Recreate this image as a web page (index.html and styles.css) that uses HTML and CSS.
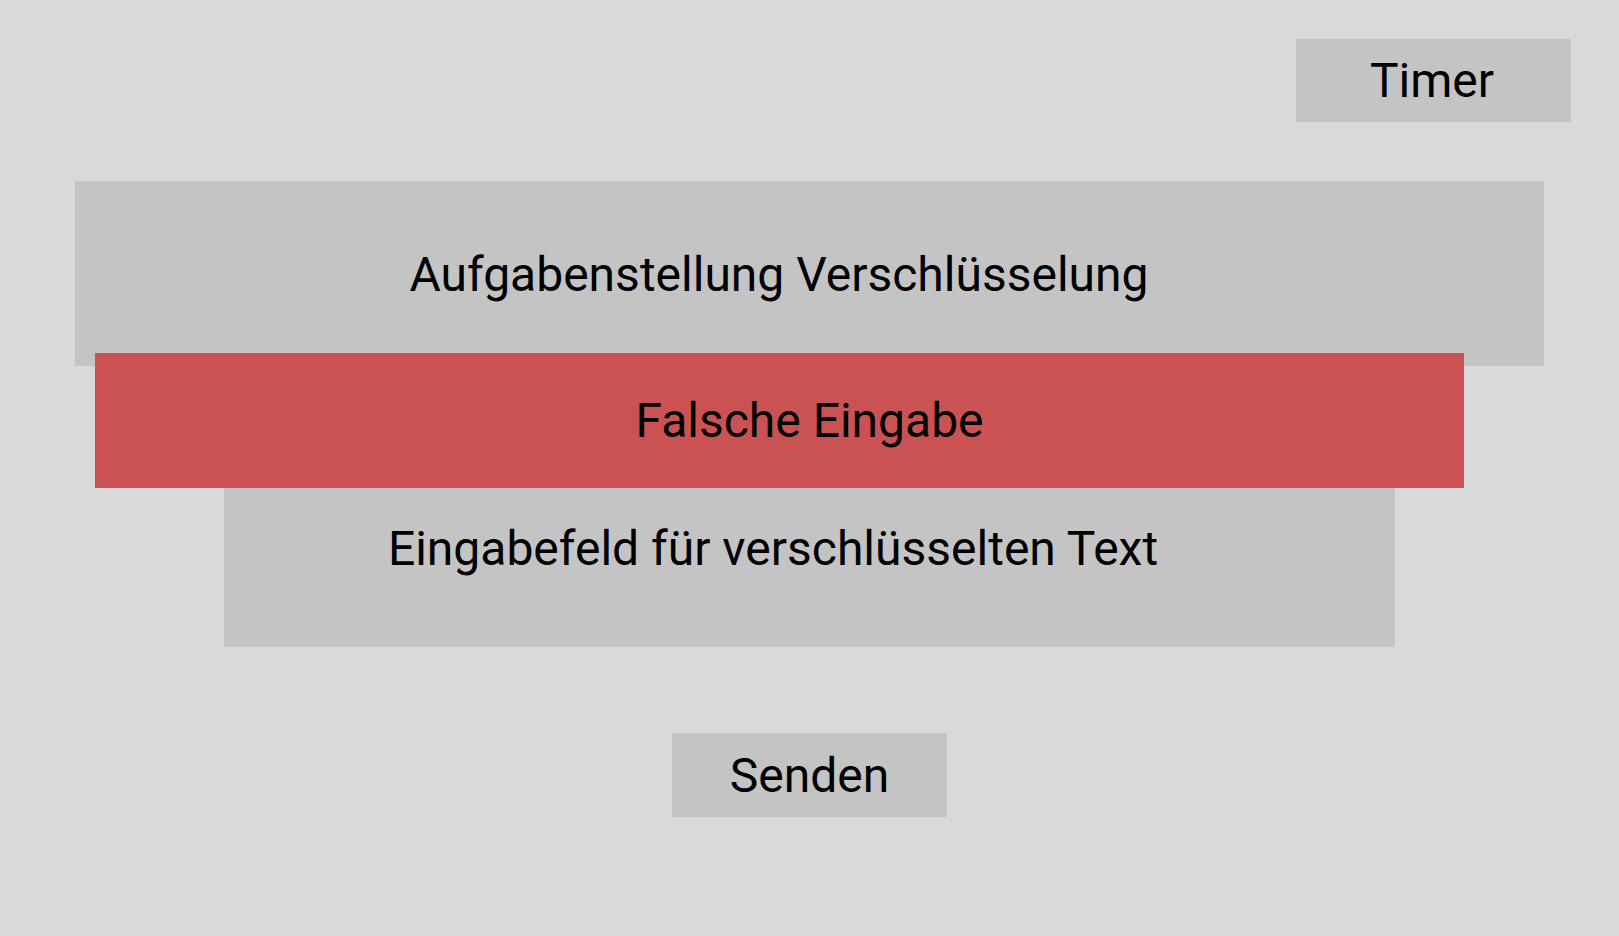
FILE: index.html
```html
<!DOCTYPE html>
<html lang="de">
<head>
<meta charset="utf-8">
<title>Verschlüsselung</title>
<link rel="stylesheet" href="styles.css">
</head>
<body>
<div class="page">
  <header class="topbar">
    <div class="timer">Timer</div>
  </header>
  <main class="content">
    <section class="task">Aufgabenstellung Verschlüsselung</section>
    <div class="input-field">Eingabefeld für verschlüsselten Text</div>
    <div class="error">Falsche Eingabe</div>
    <div class="actions">
      <button class="send" type="button">Senden</button>
    </div>
  </main>
</div>
</body>
</html>
```

FILE: styles.css
```css
html, body {
  margin: 0;
  padding: 0;
}
body {
  background: #d9d9d9;
  font-family: Roboto, "Liberation Sans", sans-serif;
  color: #000;
  width: 1619px;
  height: 936px;
  overflow: hidden;
}
.page {
  display: flex;
  flex-direction: column;
  padding-top: 39px;
}
.topbar {
  display: flex;
  justify-content: flex-end;
  padding-right: 48px;
}
.timer {
  width: 275px;
  height: 83px;
  background: #c4c4c4;
  display: flex;
  align-items: center;
  justify-content: center;
  font-size: 48px;
  box-sizing: border-box;
  padding-right: 3px;
}
.content {
  position: relative;
  display: flex;
  flex-direction: column;
  align-items: center;
  margin-top: 59px;
}
.task {
  width: 1469px;
  height: 185px;
  background: #c4c4c4;
  display: flex;
  align-items: center;
  justify-content: center;
  font-size: 48px;
  box-sizing: border-box;
  padding-right: 61px;
  padding-top: 2px;
}
.input-field {
  margin-top: 122px;
  width: 1171px;
  height: 159px;
  background: #c4c4c4;
  box-sizing: border-box;
  font-size: 48px;
  text-align: center;
  padding-top: 32px;
  padding-right: 73px;
}
.error {
  position: absolute;
  left: 95px;
  top: 172px;
  width: 1369px;
  height: 135px;
  background: #cb5252;
  display: flex;
  align-items: center;
  justify-content: center;
  font-size: 48px;
  padding-left: 60px;
  box-sizing: border-box;
}
.actions {
  margin-top: 86px;
  display: flex;
  justify-content: center;
}
.send {
  width: 275px;
  height: 84px;
  border: 0;
  padding: 0;
  background: #c4c4c4;
  font-family: inherit;
  font-size: 48px;
  color: #000;
}
```
